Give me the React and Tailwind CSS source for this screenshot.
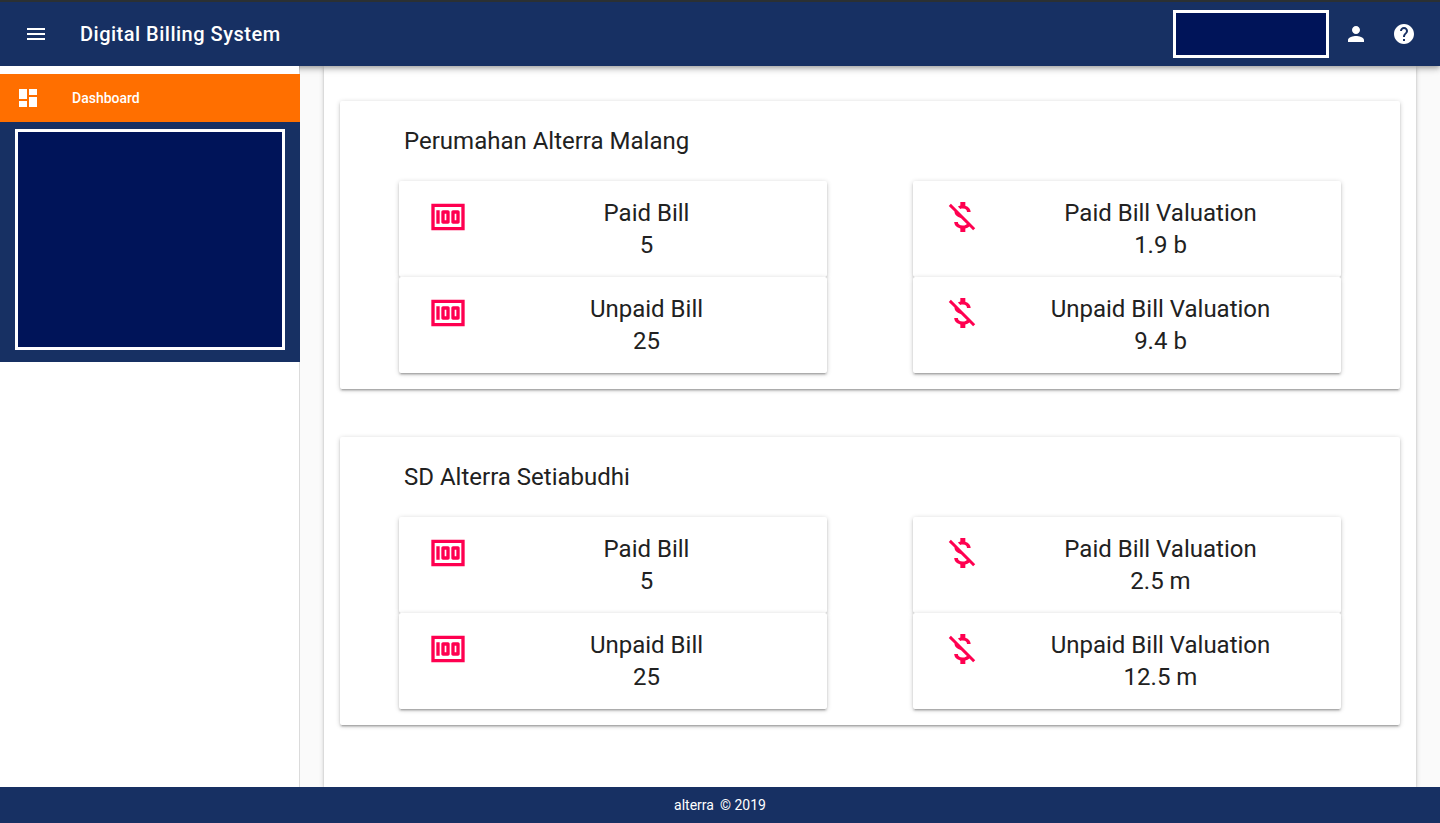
import { MdMenu, MdPerson, MdHelp, MdDashboard } from 'react-icons/md';

const sites = [
  { name: 'Perumahan Alterra Malang', paid: '5', unpaid: '25', paidValue: '1.9 b', unpaidValue: '9.4 b' },
  { name: 'SD Alterra Setiabudhi', paid: '5', unpaid: '25', paidValue: '2.5 m', unpaidValue: '12.5 m' },
];

function MoneyIcon() {
  return (
    <svg viewBox="0 0 24 24" className="size-10 shrink-0 fill-[#ff0050]" aria-hidden="true">
      <path d="M5 8h2v8H5zM12 8H9c-.55 0-1 .45-1 1v6c0 .55.45 1 1 1h3c.55 0 1-.45 1-1V9c0-.55-.45-1-1-1zm-1 6h-1v-4h1v4zM18 8h-3c-.55 0-1 .45-1 1v6c0 .55.45 1 1 1h3c.55 0 1-.45 1-1V9c0-.55-.45-1-1-1zm-1 6h-1v-4h1v4z" />
      <path d="M2 4v16h20V4H2zm2 14V6h16v12H4z" />
    </svg>
  );
}

function MoneyOffIcon() {
  return (
    <svg viewBox="0 0 24 24" className="size-10 shrink-0 fill-[#ff0050]" aria-hidden="true">
      <path d="M12.5 6.9c1.78 0 2.44.85 2.5 2.1h2.21c-.07-1.72-1.12-3.3-3.21-3.81V3h-3v2.16c-.53.12-1.03.3-1.48.54l1.47 1.47c.41-.17.91-.27 1.51-.27zM5.33 4.06L4.06 5.33 7.5 8.77c0 2.08 1.56 3.21 3.91 3.91l3.51 3.51c-.34.48-1.05.91-2.42.91-2.06 0-2.87-.92-2.98-2.1h-2.2c.12 2.19 1.76 3.42 3.68 3.83V21h3v-2.15c.96-.18 1.82-.55 2.45-1.12l2.22 2.22 1.27-1.27L5.33 4.06z" />
    </svg>
  );
}

const paper =
  'bg-white shadow-[0_1px_5px_rgba(0,0,0,0.2),0_2px_2px_rgba(0,0,0,0.14),0_3px_1px_-2px_rgba(0,0,0,0.12)]';

function Stat({ icon, label, value }) {
  return (
    <div className={`${paper} flex gap-3.5 rounded-xs py-4 pr-4 pl-[29px]`}>
      {icon}
      <dl className="flex-1 text-center text-2xl leading-8">
        <dt>{label}</dt>
        <dd>{value}</dd>
      </dl>
    </div>
  );
}

function SiteCard({ site }) {
  return (
    <section className={`${paper} rounded-xs pt-6 pb-4`}>
      <h2 className="px-16 text-2xl leading-8">{site.name}</h2>
      <div className="mt-6 grid grid-cols-2 gap-x-[86px] px-[59px]">
        <Stat icon={<MoneyIcon />} label="Paid Bill" value={site.paid} />
        <Stat icon={<MoneyOffIcon />} label="Paid Bill Valuation" value={site.paidValue} />
        <Stat icon={<MoneyIcon />} label="Unpaid Bill" value={site.unpaid} />
        <Stat icon={<MoneyOffIcon />} label="Unpaid Bill Valuation" value={site.unpaidValue} />
      </div>
    </section>
  );
}

function IconButton({ label, children }) {
  return (
    <button type="button" aria-label={label} className="grid size-12 place-items-center text-2xl">
      {children}
    </button>
  );
}

export default function App() {
  return (
    <div className="flex min-h-screen flex-col bg-[#fafafa] font-[Roboto,sans-serif] text-[#212121]">
      <header className="z-10 flex h-[66px] items-center border-t-2 border-[#2b3033] bg-[#173063] px-3 text-white shadow-[0_2px_4px_-1px_rgba(0,0,0,0.2),0_4px_5px_rgba(0,0,0,0.14),0_1px_10px_rgba(0,0,0,0.12)]">
        <IconButton label="Menu">
          <MdMenu />
        </IconButton>
        <h1 className="ml-5 flex-1 text-xl font-medium tracking-wide">Digital Billing System</h1>
        <div className="mr-[3px] h-12 w-[156px] border-3 border-white bg-[#001459]" />
        <IconButton label="Account">
          <MdPerson />
        </IconButton>
        <IconButton label="Help">
          <MdHelp />
        </IconButton>
      </header>

      <div className="flex flex-1">
        <nav className="z-20 w-[300px] shrink-0 border-r border-black/12 bg-white bg-clip-padding pt-2">
          <a href="#dashboard" className="-mr-px flex h-12 items-center gap-8 bg-[#ff6f00] px-4 text-sm font-medium text-white">
            <MdDashboard className="text-2xl" />
            Dashboard
          </a>
          <div className="-mr-px h-60 bg-[#173063] px-[15px] pt-[7px] pb-3">
            <div className="h-full border-3 border-white bg-[#001459]" />
          </div>
        </nav>

        <main className="flex flex-1 px-6">
          <div className={`${paper} flex flex-1 flex-col gap-12 px-4 pt-[35px] pb-12`}>
            {sites.map((site) => (
              <SiteCard key={site.name} site={site} />
            ))}
          </div>
        </main>
      </div>

      <footer className="z-20 flex h-9 items-center justify-center gap-1.5 bg-[#173063] text-sm text-white">
        <span>alterra</span>
        <span>© 2019</span>
      </footer>
    </div>
  );
}
